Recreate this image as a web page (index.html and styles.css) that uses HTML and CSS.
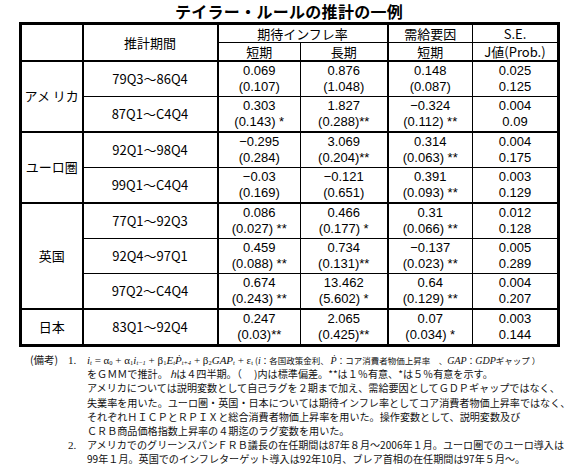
FILE: index.html
```html
<!DOCTYPE html>
<html lang="ja">
<head>
    <meta charset="UTF-8">
    <title>テイラー・ルールの推計の一例</title>
    <link rel="stylesheet" href="styles.css">
</head>
<body>
    <div class="page">
        <h1 class="title">テイラー・ルールの推計の一例</h1>

        <table class="est">
            <colgroup>
                <col class="c-country">
                <col class="c-period">
                <col class="c-short">
                <col class="c-long">
                <col class="c-gap">
                <col class="c-se">
            </colgroup>
            <thead>
                <tr>
                    <th rowspan="2"></th>
                    <th rowspan="2">推計期間</th>
                    <th colspan="2">期待インフレ率</th>
                    <th>需給要因</th>
                    <th>S.E.</th>
                </tr>
                <tr>
                    <th>短期</th>
                    <th>長期</th>
                    <th>短期</th>
                    <th>J値(Prob.)</th>
                </tr>
            </thead>
            <tbody>
                <tr>
                    <td rowspan="2" class="country">アメ リカ</td>
                    <td class="period">79Q3～86Q4</td>
                    <td>0.069<br>(0.107)</td>
                    <td>0.876<br>(1.048)</td>
                    <td>0.148<br>(0.087)</td>
                    <td>0.025<br>0.125</td>
                </tr>
                <tr>
                    <td class="period">87Q1～C4Q4</td>
                    <td>0.303<br>(0.143) *</td>
                    <td>1.827<br>(0.288)**</td>
                    <td>−0.324<br>(0.112) **</td>
                    <td>0.004<br>0.09</td>
                </tr>
            </tbody>
            <tbody>
                <tr>
                    <td rowspan="2" class="country">ユーロ圏</td>
                    <td class="period">92Q1～98Q4</td>
                    <td>−0.295<br>(0.284)</td>
                    <td>3.069<br>(0.204)**</td>
                    <td>0.314<br>(0.063) **</td>
                    <td>0.004<br>0.175</td>
                </tr>
                <tr>
                    <td class="period">99Q1～C4Q4</td>
                    <td>−0.03<br>(0.169)</td>
                    <td>−0.121<br>(0.651)</td>
                    <td>0.391<br>(0.093) **</td>
                    <td>0.003<br>0.129</td>
                </tr>
            </tbody>
            <tbody>
                <tr>
                    <td rowspan="3" class="country">英国</td>
                    <td class="period">77Q1～92Q3</td>
                    <td>0.086<br>(0.027) **</td>
                    <td>0.466<br>(0.177) *</td>
                    <td>0.31<br>(0.066) **</td>
                    <td>0.012<br>0.128</td>
                </tr>
                <tr>
                    <td class="period">92Q4～97Q1</td>
                    <td>0.459<br>(0.088) **</td>
                    <td>0.734<br>(0.131)**</td>
                    <td>−0.137<br>(0.023) **</td>
                    <td>0.005<br>0.289</td>
                </tr>
                <tr>
                    <td class="period">97Q2～C4Q4</td>
                    <td>0.674<br>(0.243) **</td>
                    <td>13.462<br>(5.602) *</td>
                    <td>0.64<br>(0.129) **</td>
                    <td>0.004<br>0.207</td>
                </tr>
            </tbody>
            <tbody>
                <tr>
                    <td class="country">日本</td>
                    <td class="period">83Q1～92Q4</td>
                    <td>0.247<br>(0.03)**</td>
                    <td>2.065<br>(0.425)**</td>
                    <td>0.07<br>(0.034) *</td>
                    <td>0.003<br>0.144</td>
                </tr>
            </tbody>
        </table>

        <div class="notes">
            <div class="note-label">(備考)</div>
            <div class="note-num">1.</div>
            <div class="note-text">
                <div class="line"><span class="fx"><i>i<sub>t</sub></i> = α<sub>0</sub> + α<sub>1</sub><i>i<sub>t−1</sub></i> + β<sub>1</sub><i>E<sub>t</sub>Ṗ<sub>t+4</sub></i> + β<sub>2</sub><i>GAP<sub>t</sub></i> + ε<sub>t</sub></span><span class="small">(<i>i</i>：各国政策金利、 <i>Ṗ</i>：コア消費者物価上昇率　、<i>GAP</i>：<i>GDP</i>ギャップ ）</span></div>
                <div class="line">をＧＭＭで推計。 <i>h</i>は４四半期。（　 )内は標準偏差。**は１％有意、*は５％有意を示す。</div>
                <div class="line">アメリカについては説明変数として自己ラグを２期まで加え、需給要因としてＧＤＰギャップではなく、</div>
                <div class="line">失業率を用いた。ユーロ圏・英国・日本については期待インフレ率としてコア消費者物価上昇率ではなく、</div>
                <div class="line">それぞれＨＩＣＰとＲＰＩＸと総合消費者物価上昇率を用いた。操作変数として、説明変数及び</div>
                <div class="line">ＣＲＢ商品価格指数上昇率の４期迄のラグ変数を用いた。</div>
            </div>
            <div class="note-label"></div>
            <div class="note-num">2.</div>
            <div class="note-text">
                <div class="line">アメリカでのグリーンスパンＦＲＢ議長の在任期間は87年８月～2006年１月。ユーロ圏でのユーロ導入は</div>
                <div class="line">99年１月。英国でのインフレターゲット導入は92年10月、ブレア首相の在任期間は97年５月～。</div>
            </div>
        </div>
    </div>
</body>
</html>
```

FILE: styles.css
```css
body {
    margin: 0;
    background: #fff;
    color: #000;
    font-family: "Liberation Sans", "Noto Sans CJK JP", sans-serif;
}

.page {
    padding: 2px 0 0 19px;
    width: 540px;
}

.title {
    margin: 0 0 2px;
    font-family: "Noto Sans CJK JP", sans-serif;
    font-size: 16px;
    font-weight: bold;
    line-height: 18px;
    letter-spacing: 0.3px;
    text-align: center;
}

/* table */

.est {
    width: 540px;
    table-layout: fixed;
    border-collapse: collapse;
    border: 3px solid #000;
    font-size: 13px;
    text-align: center;
}

.c-country { width: 62px; border-right: 2px solid #000; }
.c-period  { width: 135px; border-right: 2px solid #000; }
.c-short   { width: 83px; }
.c-long    { width: 87px; border-right: 2px solid #000; }
.c-gap     { width: 85px; }
.c-se      { width: 86px; }

.est th,
.est td {
    border: 1px solid #000;
    padding: 0;
    height: 34px;
    line-height: 16.5px;
    font-weight: normal;
    overflow: hidden;
}

.est th {
    height: 17px;
    font-family: "Noto Sans CJK JP", sans-serif;
    line-height: 17px;
}

.est tbody {
    border-top: 2px solid #000;
}

.est td.country,
.est td.period {
    font-family: "Noto Sans CJK JP", sans-serif;
}

/* notes */

.notes {
    display: grid;
    grid-template-columns: 38px 19px auto;
    margin: 6px 0 0 11px;
    font-family: "Noto Sans CJK JP", sans-serif;
    font-size: 10.1px;
    line-height: 14.2px;
    color: #111;
}

.note-label {
    font-size: 10.5px;
}

.note-num {
    font-family: "Liberation Serif", serif;
    font-size: 11px;
}

.line {
    height: 14.2px;
    white-space: nowrap;
}

.fx {
    font-family: "Liberation Serif", "DejaVu Serif", serif;
    font-size: 11px;
    line-height: 12px;
    margin-right: 2px;
}

.fx sub {
    font-size: 6.5px;
    line-height: 0;
    vertical-align: -1px;
}

.small {
    font-size: 8.5px;
    line-height: 12px;
}

.small i {
    font-family: "Liberation Serif", serif;
    font-size: 10px;
}
```
